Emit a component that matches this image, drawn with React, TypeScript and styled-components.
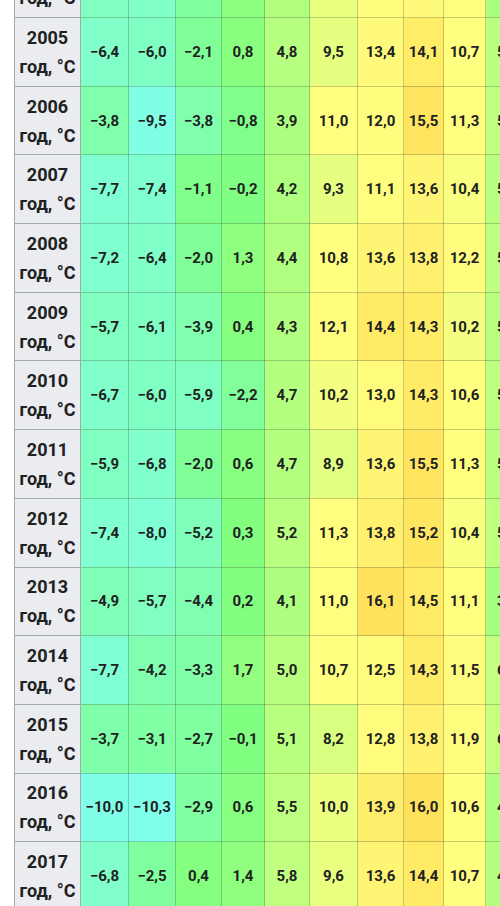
import styled, { createGlobalStyle } from "styled-components";

const GlobalStyle = createGlobalStyle`
  html, body {
    margin: 0;
    padding: 0;
    background: #ffffff;
    overflow: hidden;
  }
  body {
    font-family: Roboto, "Noto Sans", "Liberation Sans", sans-serif;
    color: #202122;
  }
`;

// temperature → cell colour, piecewise between anchor stops
const stops: [number, number, number, number][] = [
  [-12, 128, 255, 255],
  [-10, 128, 255, 232],
  [-6, 128, 255, 196],
  [-3, 128, 255, 164],
  [0, 128, 255, 128],
  [5, 184, 255, 128],
  [10, 236, 255, 128],
  [10.6, 255, 255, 128],
  [13.4, 255, 250, 124],
  [14, 255, 236, 104],
  [16, 255, 226, 92],
];

function tempColor(t: number) {
  if (t <= stops[0][0]) return `rgb(${stops[0].slice(1).join(",")})`;
  for (let i = 1; i < stops.length; i++) {
    const [t1, r1, g1, b1] = stops[i];
    const [t0, r0, g0, b0] = stops[i - 1];
    if (t <= t1) {
      const k = (t - t0) / (t1 - t0);
      const r = Math.round(r0 + (r1 - r0) * k);
      const g = Math.round(g0 + (g1 - g0) * k);
      const b = Math.round(b0 + (b1 - b0) * k);
      return `rgb(${r},${g},${b})`;
    }
  }
  const last = stops[stops.length - 1];
  return `rgb(${last.slice(1).join(",")})`;
}

const fmt = (t: number) => (t < 0 ? "\u2212" : "") + Math.abs(t).toFixed(1).replace(".", ",");

const rows: [number, number[]][] = [
  [2004, [-5.6, -6.5, -2.4, 1.0, 4.5, 9.8, 12.4, 13.2, 11.0, 3.8, -1.5, -4.0]],
  [2005, [-6.4, -6.0, -2.1, 0.8, 4.8, 9.5, 13.4, 14.1, 10.7, 5.3, -0.8, -4.6]],
  [2006, [-3.8, -9.5, -3.8, -0.8, 3.9, 11.0, 12.0, 15.5, 11.3, 5.8, -1.2, -3.1]],
  [2007, [-7.7, -7.4, -1.1, -0.2, 4.2, 9.3, 11.1, 13.6, 10.4, 5.1, -0.4, -5.2]],
  [2008, [-7.2, -6.4, -2.0, 1.3, 4.4, 10.8, 13.6, 13.8, 12.2, 5.5, -0.9, -4.4]],
  [2009, [-5.7, -6.1, -3.9, 0.4, 4.3, 12.1, 14.4, 14.3, 10.2, 5.0, -1.6, -6.0]],
  [2010, [-6.7, -6.0, -5.9, -2.2, 4.7, 10.2, 13.0, 14.3, 10.6, 5.6, -0.3, -4.9]],
  [2011, [-5.9, -6.8, -2.0, 0.6, 4.7, 8.9, 13.6, 15.5, 11.3, 5.2, -1.1, -3.7]],
  [2012, [-7.4, -8.0, -5.2, 0.3, 5.2, 11.3, 13.8, 15.2, 10.4, 5.9, -0.7, -5.5]],
  [2013, [-4.9, -5.7, -4.4, 0.2, 4.1, 11.0, 16.1, 14.5, 11.1, 3.4, -1.9, -4.2]],
  [2014, [-7.7, -4.2, -3.3, 1.7, 5.0, 10.7, 12.5, 14.3, 11.5, 6.1, -0.6, -3.9]],
  [2015, [-3.7, -3.1, -2.7, -0.1, 5.1, 8.2, 12.8, 13.8, 11.9, 6.4, -0.2, -4.1]],
  [2016, [-10.0, -10.3, -2.9, 0.6, 5.5, 10.0, 13.9, 16.0, 10.6, 4.3, -1.3, -5.0]],
  [2017, [-6.8, -2.5, 0.4, 1.4, 5.8, 9.6, 13.6, 14.4, 10.7, 4.7, -0.5, -3.3]],
];

const colWidths = [66, 48, 47, 46, 43, 45, 48, 46, 40, 42, 44, 44, 44];

const Page = styled.div`
  width: 500px;
  height: 906px;
  overflow: hidden;
  padding-left: 14px;
  box-sizing: border-box;
`;

const Table = styled.table`
  border-collapse: collapse;
  table-layout: fixed;
  margin-top: -51.7px;
  width: ${colWidths.reduce((a, b) => a + b, 0)}px;
`;

const Row = styled.tr`
  height: 68.7px;
`;

const YearCell = styled.th`
  background: #eaecf0;
  border: 1px solid #a2a9b1;
  font-size: 18px;
  font-weight: 700;
  line-height: 29px;
  text-align: center;
  padding: 0;
  color: #202122;
`;

const TempCell = styled.td<{ $t: number }>`
  background: ${(p) => tempColor(p.$t)};
  border: 1px solid rgba(60, 70, 40, 0.28);
  font-size: 15px;
  font-weight: 700;
  text-align: center;
  vertical-align: middle;
  padding: 0;
  white-space: nowrap;
  color: #202122;
`;

export default function App() {
  return (
    <Page>
      <GlobalStyle />
      <Table>
        <colgroup>
          {colWidths.map((w, i) => (
            <col key={i} style={{ width: w }} />
          ))}
        </colgroup>
        <tbody>
          {rows.map(([year, temps]) => (
            <Row key={year}>
              <YearCell>
                {year}
                <br />
                год, °C
              </YearCell>
              {temps.map((t, i) => (
                <TempCell key={i} $t={t}>
                  {fmt(t)}
                </TempCell>
              ))}
            </Row>
          ))}
        </tbody>
      </Table>
    </Page>
  );
}
